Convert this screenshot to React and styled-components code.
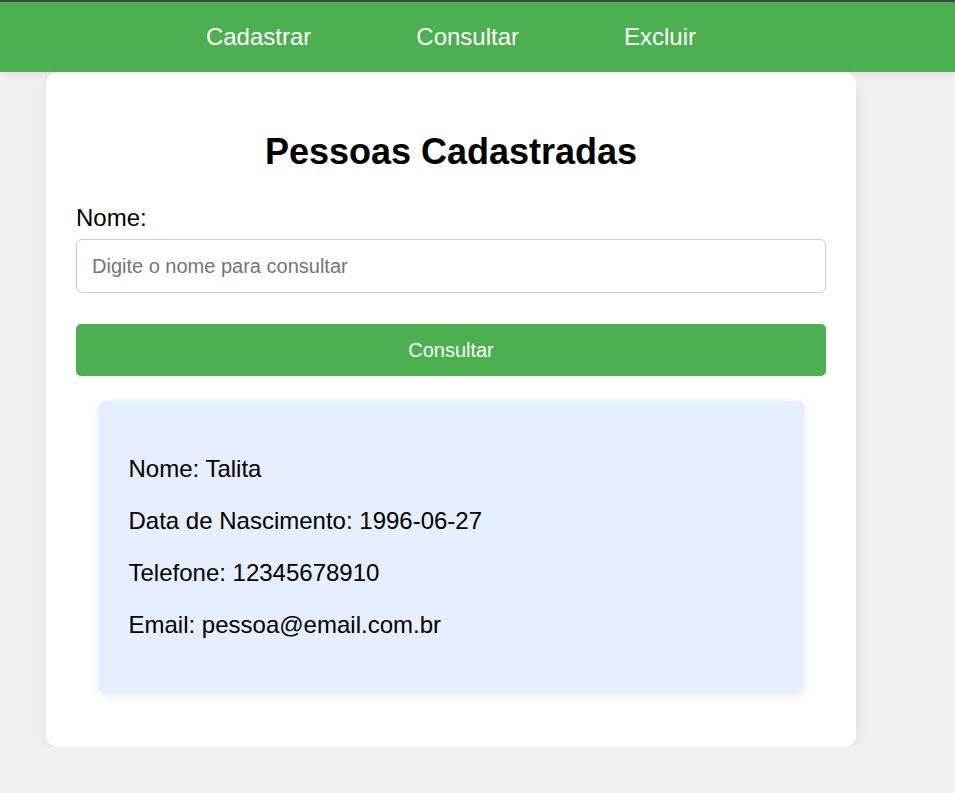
import styled, { createGlobalStyle } from 'styled-components'

const GlobalStyle = createGlobalStyle`
  html, body {
    margin: 0;
    padding: 0;
    background-color: #f1f1f1;
    font-family: "Liberation Sans", Arial, sans-serif;
  }
`

const Header = styled.header`
  background-color: #4caf50;
  border-top: 2px solid #444;
  height: 70px;
  box-shadow: 0 2px 6px rgba(0, 0, 0, 0.08);
`

const Nav = styled.nav`
  max-width: 902px;
  height: 100%;
  display: flex;
  justify-content: center;
  align-items: center;
  gap: 105px;
`

const NavLink = styled.a`
  color: #fff;
  font-size: 24px;
  text-decoration: none;
  cursor: pointer;
`

const Main = styled.main`
  max-width: 902px;
  display: flex;
  justify-content: center;
`

const Card = styled.section`
  width: 810px;
  box-sizing: border-box;
  background-color: #fff;
  border-radius: 12px;
  padding: 59px 30px 54px;
  box-shadow: 0 4px 14px rgba(0, 0, 0, 0.08);
`

const Title = styled.h1`
  margin: 0 0 31px;
  text-align: center;
  font-size: 36px;
  font-weight: bold;
  color: #000;
`

const Label = styled.label`
  display: block;
  font-size: 24px;
  color: #000;
  margin-bottom: 7px;
`

const Input = styled.input`
  display: block;
  width: 100%;
  box-sizing: border-box;
  height: 54px;
  padding: 0 15px;
  font-family: inherit;
  font-size: 20px;
  border: 1px solid #ccc;
  border-radius: 6px;
  outline: none;

  &::placeholder {
    color: #757575;
  }
`

const Button = styled.button`
  display: block;
  width: 100%;
  height: 52px;
  margin-top: 31px;
  border: none;
  border-radius: 5px;
  background-color: #4caf50;
  color: #fff;
  font-family: inherit;
  font-size: 20px;
  cursor: pointer;
`

const Result = styled.div`
  width: 94%;
  box-sizing: border-box;
  margin: 25px auto 0;
  padding: 30px 30px;
  background-color: #e6effd;
  border-radius: 6px;
  box-shadow: 0 2px 8px rgba(0, 0, 0, 0.1);
`

const Field = styled.p`
  margin: 24px 0;
  font-size: 24px;
  color: #000;
`

const pessoa = {
  nome: 'Talita',
  nascimento: '1996-06-27',
  telefone: '12345678910',
  email: 'pessoa@email.com.br',
}

export default function App() {
  return (
    <>
      <GlobalStyle />
      <Header>
        <Nav>
          <NavLink>Cadastrar</NavLink>
          <NavLink>Consultar</NavLink>
          <NavLink>Excluir</NavLink>
        </Nav>
      </Header>
      <Main>
        <Card>
          <Title>Pessoas Cadastradas</Title>
          <Label htmlFor="nome">Nome:</Label>
          <Input id="nome" placeholder="Digite o nome para consultar" />
          <Button>Consultar</Button>
          <Result>
            <Field>Nome: {pessoa.nome}</Field>
            <Field>Data de Nascimento: {pessoa.nascimento}</Field>
            <Field>Telefone: {pessoa.telefone}</Field>
            <Field>Email: {pessoa.email}</Field>
          </Result>
        </Card>
      </Main>
    </>
  )
}
